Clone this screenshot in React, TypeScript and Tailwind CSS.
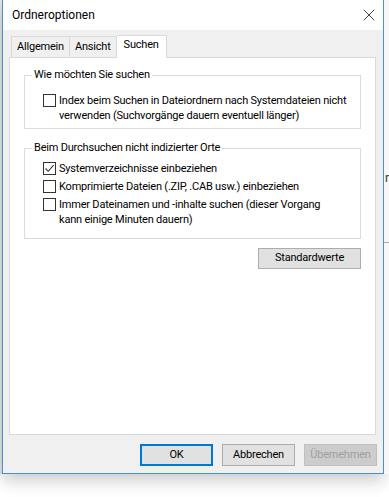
import { X } from "lucide-react";

const font = { fontFamily: 'Roboto, "Liberation Sans", Arial, sans-serif' };

function Box({ checked }: { checked?: boolean }) {
  return (
    <span className="mt-[1px] flex size-[13px] shrink-0 items-center justify-center border border-[#333] bg-white">
      {checked && (
        <svg width="11" height="11" viewBox="0 0 11 11" fill="none">
          <path d="M1.5 5.5 L4.2 8.3 L9.6 2.2" stroke="#333" strokeWidth="1.1" />
        </svg>
      )}
    </span>
  );
}

function Option({ checked, children }: { checked?: boolean; children: React.ReactNode }) {
  return (
    <label className="flex items-start gap-[3px]">
      <Box checked={checked} />
      <span className="whitespace-nowrap leading-[15px]">{children}</span>
    </label>
  );
}

function Group({ title, children, className }: { title: string; children: React.ReactNode; className?: string }) {
  return (
    <fieldset className={`w-[337px] min-w-0 border border-[#dcdcdc] px-[18px] ${className ?? ""}`}>
      <legend className="ml-[-11px] px-[2px] leading-[16px]">{title}</legend>
      {children}
    </fieldset>
  );
}

function Btn({ children, variant }: { children: React.ReactNode; variant?: "default" | "disabled" }) {
  const cls =
    variant === "default"
      ? "border-2 border-[#0078d7] bg-[#e1e1e1] text-black"
      : variant === "disabled"
      ? "border border-[#bfbfbf] bg-[#cccccc] text-[#a0a0a0]"
      : "border border-[#adadad] bg-[#e1e1e1] text-black";
  return <div className={`flex h-[22px] w-[73px] items-center justify-center ${cls}`}>{children}</div>;
}

export default function App() {
  return (
    <div className="relative h-[497px] w-[389px] overflow-hidden bg-white text-[11px] tracking-[-0.2px] text-black" style={font}>
      <div className="flex h-[474px]">
        <div className="w-[2px] bg-[#e4e8ec]" />
        <div className="flex w-[382px] flex-col border-x border-b border-[#4a90d0] bg-[#f0f0f0] shadow-[0_6px_16px_rgba(0,0,0,0.22)]">
          <div className="flex h-[30px] items-center justify-between bg-white pl-[9px] pr-[4px]">
            <span className="text-[12px] tracking-normal">Ordneroptionen</span>
            <X className="size-[20px]" strokeWidth={0.9} />
          </div>
          <div className="flex flex-col px-[6px] pt-[5px]">
            <div className="flex items-end pl-[2px]">
              <div className="flex h-[21px] items-center border border-b-0 border-[#d9d9d9] bg-[#f0f0f0] px-[5px]">Allgemein</div>
              <div className="flex h-[21px] items-center border border-b-0 border-l-0 border-[#d9d9d9] bg-[#f0f0f0] px-[5px]">Ansicht</div>
              <div className="relative z-10 -mb-px flex h-[23px] items-center border border-b-0 border-l-0 border-[#d9d9d9] bg-white px-[7px] pb-[3px]">Suchen</div>
            </div>
            <div className="flex h-[378px] w-[367px] flex-col border border-[#d9d9d9] bg-white px-[14px] pt-[9px]">
              <Group title="Wie möchten Sie suchen" className="pb-[5px]">
                <div className="pt-[10px]">
                  <Option>
                    Index beim Suchen in Dateiordnern nach Systemdateien nicht
                    <br />
                    verwenden (Suchvorgänge dauern eventuell länger)
                  </Option>
                </div>
              </Group>
              <Group title="Beim Durchsuchen nicht indizierter Orte" className="mt-[11px] pb-[11px]">
                <div className="flex flex-col gap-[3px] pt-[5px]">
                  <Option checked>Systemverzeichnisse einbeziehen</Option>
                  <Option>Komprimierte Dateien (.ZIP, .CAB usw.) einbeziehen</Option>
                  <Option>
                    Immer Dateinamen und -inhalte suchen (dieser Vorgang
                    <br />
                    kann einige Minuten dauern)
                  </Option>
                </div>
              </Group>
              <div className="mt-[9px] flex w-[337px] justify-end">
                <div className="flex h-[21px] w-[103px] items-center justify-center border border-[#adadad] bg-[#e1e1e1]">
                  Standardwerte
                </div>
              </div>
            </div>
            <div className="mt-[9px] flex justify-end gap-[9px]">
              <Btn variant="default">OK</Btn>
              <Btn>Abbrechen</Btn>
              <Btn variant="disabled">Übernehmen</Btn>
            </div>
          </div>
        </div>
        <div className="flex flex-1 flex-col bg-[#f7f7f7]">
          <div className="h-[172px]" />
          <span className="pl-[1px] text-[12px] leading-[12px] text-[#333]">r</span>
          <div className="mt-[58px] h-px bg-[#aaa]" />
        </div>
      </div>
    </div>
  );
}
